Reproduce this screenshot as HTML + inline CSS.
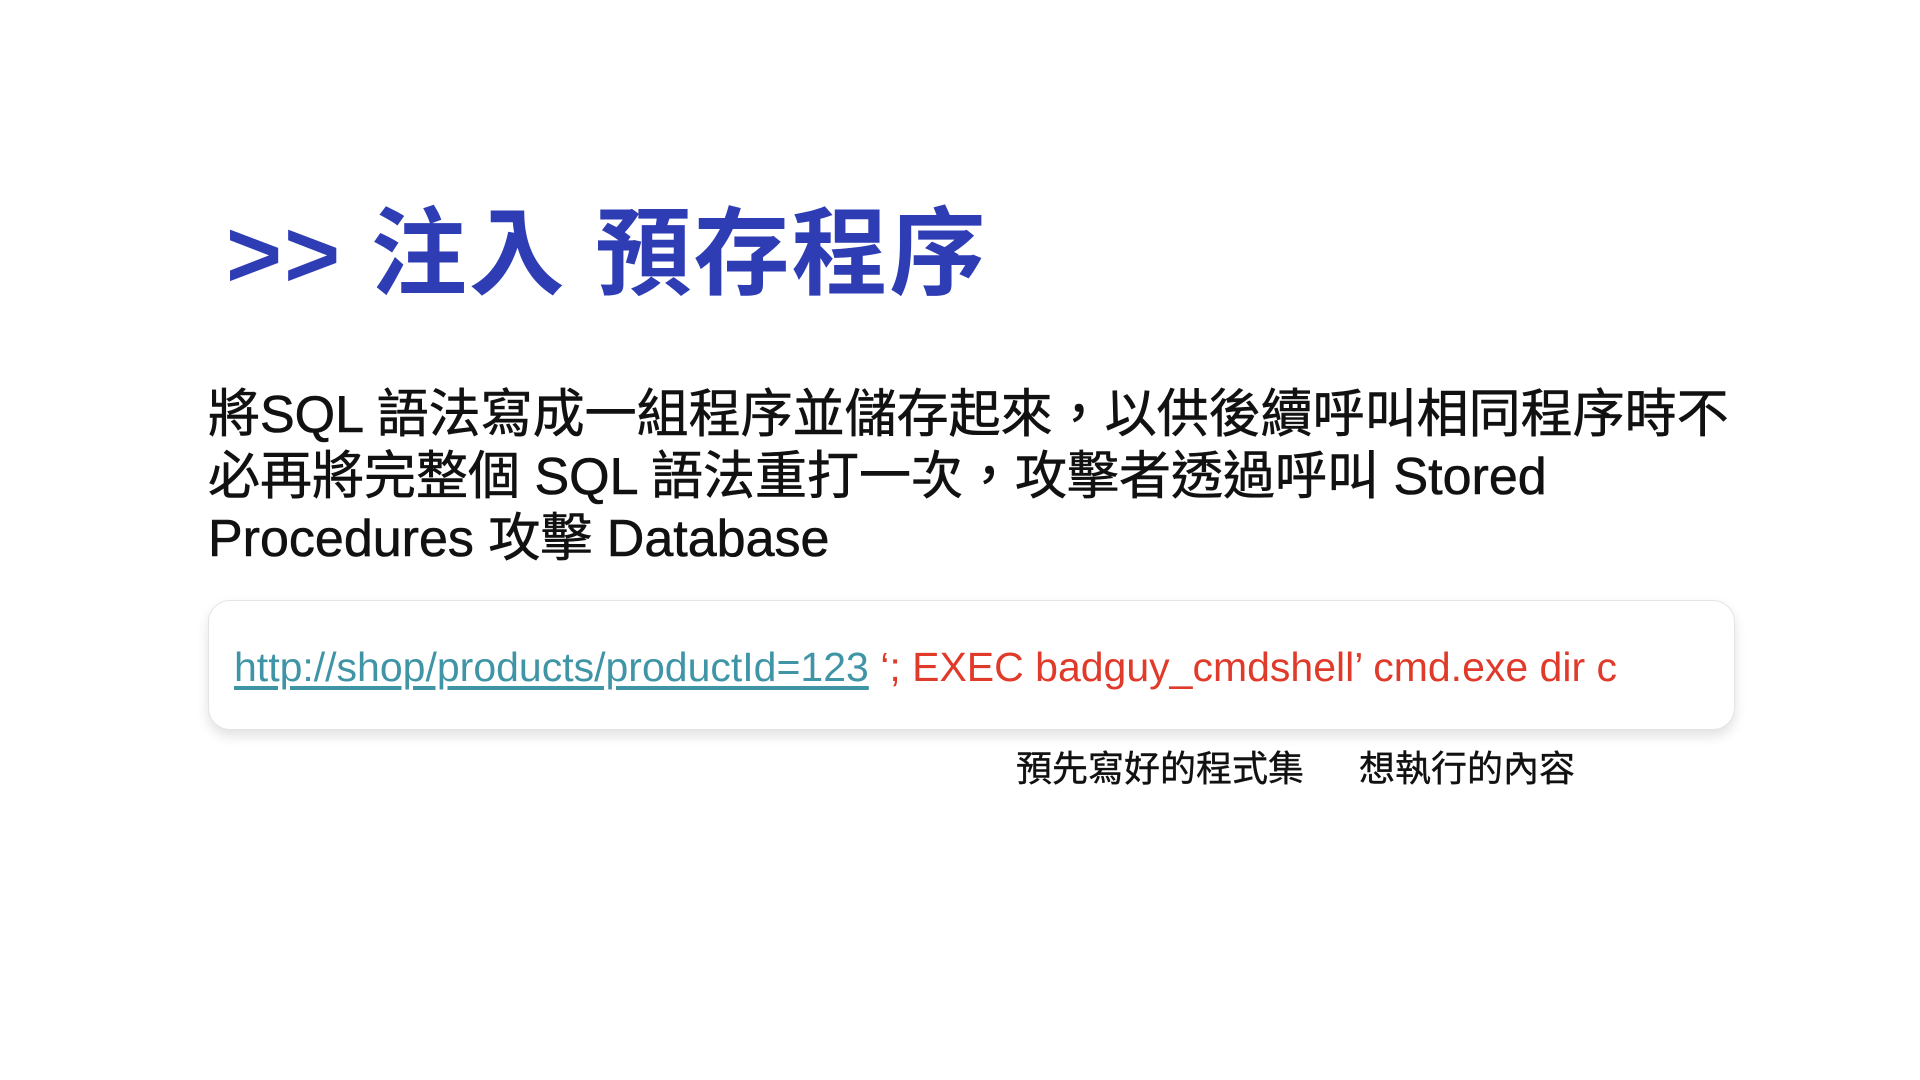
<!DOCTYPE html>
<html><head><meta charset="utf-8"><style>
body{margin:0;width:1920px;height:1080px;background:#fff;position:relative;overflow:hidden;font-family:"Liberation Sans","Noto Sans CJK TC",sans-serif;}
.t{position:absolute;left:226px;top:176px;font-size:96px;font-weight:bold;color:#2f3db5;white-space:nowrap;letter-spacing:2px;}
.b{position:absolute;left:208px;top:384px;font-size:52px;line-height:62px;color:#111;white-space:nowrap;-webkit-text-stroke:0.6px #111;}
.box{position:absolute;left:208px;top:600px;width:1527px;height:130px;border-radius:22px;border:1px solid #e4e4e4;box-shadow:0 6px 12px rgba(0,0,0,0.12);background:#fff;box-sizing:border-box;}
.c{position:absolute;left:234px;top:644px;font-size:41px;white-space:nowrap;}
.c a{color:#3f95a6;text-decoration:underline;text-underline-offset:5px}
.c span{color:#e03a2a}
.l{position:absolute;top:740px;font-size:36px;color:#111;white-space:nowrap;-webkit-text-stroke:0.4px #111;}
</style></head><body>
<div class="t">&gt;&gt; 注入 預存程序</div>
<div class="b">將SQL 語法寫成一組程序並儲存起來，以供後續呼叫相同程序時不<br>必再將完整個 SQL 語法重打一次，攻擊者透過呼叫 Stored<br>Procedures 攻擊 Database</div>
<div class="box"></div>
<div class="c"><a>http://shop/products/productId=123</a> <span>‘; EXEC badguy_cmdshell’ cmd.exe dir c</span></div>
<div class="l" style="left:1016px">預先寫好的程式集</div>
<div class="l" style="left:1359px">想執行的內容</div>
</body></html>
